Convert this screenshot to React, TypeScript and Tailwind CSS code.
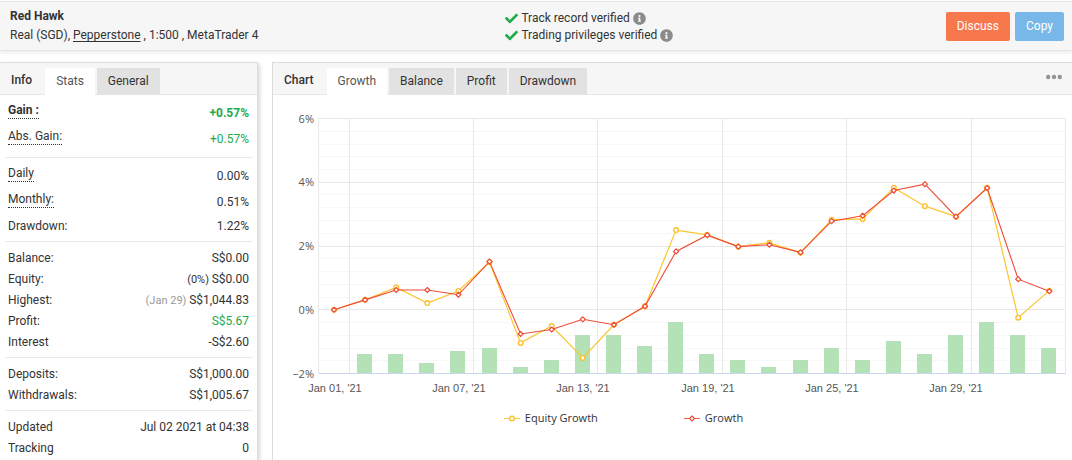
import { clsx } from "clsx";
import { FaCheck, FaInfoCircle } from "react-icons/fa";

interface StatRow {
  label: string;
  value: string;
  note?: string;
  noteStyles?: string;
  valueStyles?: string;
  hint?: boolean;
  bold?: boolean;
}

const STAT_GROUPS: { tall?: boolean; rows: StatRow[] }[] = [
  {
    tall: true,
    rows: [
      { label: "Gain :", value: "+0.57%", valueStyles: "text-[#1ea94b]", hint: true, bold: true },
      { label: "Abs. Gain:", value: "+0.57%", valueStyles: "text-[#1ea94b]", hint: true },
    ],
  },
  {
    tall: true,
    rows: [
      { label: "Daily", value: "0.00%", hint: true },
      { label: "Monthly:", value: "0.51%", hint: true },
      { label: "Drawdown:", value: "1.22%" },
    ],
  },
  {
    rows: [
      { label: "Balance:", value: "S$0.00" },
      { label: "Equity:", value: "S$0.00", note: "(0%)" },
      { label: "Highest:", value: "S$1,044.83", note: "(Jan 29)", noteStyles: "text-[#999]" },
      { label: "Profit:", value: "S$5.67", valueStyles: "text-[#1ea94b]" },
      { label: "Interest", value: "-S$2.60" },
    ],
  },
  {
    rows: [
      { label: "Deposits:", value: "S$1,000.00" },
      { label: "Withdrawals:", value: "S$1,005.67" },
    ],
  },
  {
    rows: [
      { label: "Updated", value: "Jul 02 2021 at 04:38" },
      { label: "Tracking", value: "0" },
    ],
  },
];

const GROWTH = [
  0, 0.31, 0.62, 0.62, 0.47, 1.51, -0.76, -0.62, -0.3, -0.47, 0.11, 1.83, 2.34, 1.98, 2.04, 1.8,
  2.78, 2.95, 3.74, 3.94, 2.92, 3.82, 0.96, 0.58,
];
const EQUITY = [
  0, 0.31, 0.7, 0.21, 0.59, 1.5, -1.04, -0.51, -1.51, -0.47, 0.11, 2.5, 2.35, 1.98, 2.1, 1.79,
  2.82, 2.85, 3.83, 3.25, 2.92, 3.83, -0.25, 0.6,
];
const BARS = [
  0, 19, 19, 10, 22, 25, 6, 13, 38, 38, 27, 51, 19, 13, 6, 13, 25, 13, 32, 19, 38, 51, 38, 25,
];
const DATES = ["Jan 01, '21", "Jan 07, '21", "Jan 13, '21", "Jan 19, '21", "Jan 25, '21", "Jan 29, '21"];

const PLOT = { left: 45.5, right: 792.5, top: 23.5, bottom: 278.5 };

const xAt = (i: number) => 61 + i * 31.1;
const yAt = (v: number) => PLOT.bottom - ((v + 2) * (PLOT.bottom - PLOT.top)) / 8;
const toPoints = (values: number[]) => values.map((v, i) => `${xAt(i)},${yAt(v)}`).join(" ");
const snap = (n: number) => Math.floor(n) + 0.5;

function Tabs({ title, tabs, active }: { title: string; tabs: string[]; active: string }) {
  return (
    <div className="flex h-8 items-end border-b border-[#e8e8e8] bg-[#f6f6f6] pl-[11px]">
      <h2 className="mr-[13px] text-xs leading-[27px] font-medium">{title}</h2>
      <div className="-mb-px flex gap-0.5" role="tablist">
        {tabs.map((tab) => (
          <button
            key={tab}
            type="button"
            role="tab"
            aria-selected={tab === active}
            className={clsx(
              "h-[27px] px-[11px] pb-0.5 text-xs",
              tab === active ? "bg-white text-[#555]" : "bg-[#e2e2e2] text-[#333]"
            )}
          >
            {tab}
          </button>
        ))}
      </div>
    </div>
  );
}

function Stat({ row, tall }: { row: StatRow; tall?: boolean }) {
  return (
    <div
      className={clsx(
        "flex items-start justify-between",
        tall && row.hint ? "h-[26px] leading-6" : "h-[21px] leading-[21px]",
        row.bold && "font-bold"
      )}
    >
      <dt
        className={clsx(row.hint && "mt-0.5 border-b border-dotted border-[#333] leading-[15px]")}
      >
        {row.label}
      </dt>
      <dd className={row.valueStyles}>
        {row.note && <span className={clsx("text-[11px]", row.noteStyles)}>{row.note} </span>}
        {row.value}
      </dd>
    </div>
  );
}

function Verified({ text }: { text: string }) {
  return (
    <li className="flex items-center gap-[3px] leading-[17px]">
      <FaCheck className="size-[13px] text-[#22ab4b]" />
      {text}
      <FaInfoCircle className="size-[13px] text-[#8b8b8b]" />
    </li>
  );
}

function Marker({ x, y, kind }: { x: number; y: number; kind: "equity" | "growth" }) {
  if (kind === "equity") {
    return <circle cx={x} cy={y} r="2.3" fill="#fff" stroke="#fbc02d" strokeWidth="1.4" />;
  }
  return (
    <path
      d={`M${x} ${y - 2.5}l2.5 2.5l-2.5 2.5l-2.5 -2.5z`}
      fill="#fff"
      stroke="#ee4b37"
      strokeWidth="1.2"
    />
  );
}

function GrowthChart() {
  return (
    <svg viewBox="0 0 799 305" className="block w-full" role="img" aria-label="Growth chart">
      {Array.from({ length: 21 }, (_, i) => (
        <line
          key={i}
          x1={PLOT.left}
          x2={PLOT.right}
          y1={snap(yAt(i * 0.4 - 2))}
          y2={snap(yAt(i * 0.4 - 2))}
          stroke={i % 5 === 0 ? "#e8e8e8" : "#f7f7f7"}
        />
      ))}
      {DATES.map((date, i) => (
        <line
          key={date}
          x1={snap(76 + i * 124.4)}
          x2={snap(76 + i * 124.4)}
          y1={PLOT.top}
          y2={PLOT.bottom}
          stroke="#e8e8e8"
        />
      ))}
      <path
        d={`M${PLOT.left} ${PLOT.bottom}V${PLOT.top}M${PLOT.right} ${PLOT.top}V${PLOT.bottom}`}
        stroke="#e8e8e8"
      />
      {BARS.map((h, i) => (
        <rect
          key={i}
          x={Math.round(xAt(i) - 8)}
          y={278 - h}
          width="15"
          height={h}
          fill="#b4e1b6"
        />
      ))}
      <line x1={PLOT.left} x2={PLOT.right} y1={PLOT.bottom} y2={PLOT.bottom} stroke="#ccd6eb" />

      <polyline points={toPoints(EQUITY)} fill="none" stroke="#fbc52d" strokeWidth="1.2" />
      {EQUITY.map((v, i) => (
        <Marker key={i} x={xAt(i)} y={yAt(v)} kind="equity" />
      ))}
      <polyline points={toPoints(GROWTH)} fill="none" stroke="#ee4b37" strokeWidth="1.1" />
      {GROWTH.map((v, i) => (
        <Marker key={i} x={xAt(i)} y={yAt(v)} kind="growth" />
      ))}

      <g className="fill-[#555] font-['Open_Sans',sans-serif] text-[11px]" textAnchor="end">
        {[6, 4, 2, 0, -2].map((v) => (
          <text key={v} x="41" y={Math.round(yAt(v) + 4)}>
            {v < 0 ? `−${-v}%` : `${v}%`}
          </text>
        ))}
      </g>
      <g className="fill-[#555] font-['Liberation_Sans',sans-serif] text-[11px]" textAnchor="middle">
        {DATES.map((date, i) => (
          <text key={date} x={Math.round(62 + i * 124.2)} y="297">
            {date}
          </text>
        ))}
      </g>
    </svg>
  );
}

function LegendItem({ label, kind }: { label: string; kind: "equity" | "growth" }) {
  return (
    <li className="flex items-center gap-[5px]">
      <svg viewBox="0 0 16 8" className="h-2 w-4">
        <path d="M0 4.5H16" stroke={kind === "equity" ? "#fbc93d" : "#ee5a45"} />
        <Marker x={8} y={4.5} kind={kind} />
      </svg>
      {label}
    </li>
  );
}

export default function App() {
  return (
    <div className="flex min-h-screen flex-col bg-white pt-px font-['Roboto',sans-serif] text-xs text-[#333]">
      <header className="flex items-start border-y border-[#e4e4e4] bg-[#f6f6f6] pt-[5px] pr-2 pb-[5px] pl-2.5 shadow-[0_2px_4px_rgba(0,0,0,0.08)]">
        <div className="w-[47%]">
          <h1 className="leading-[18px] font-bold">Red Hawk</h1>
          <p className="leading-5">
            Real (SGD),{" "}
            <a href="#pepperstone" className="underline underline-offset-2">
              Pepperstone
            </a>{" "}
            , 1:500 , MetaTrader 4
          </p>
        </div>
        <ul className="pt-[3px]">
          <Verified text="Track record verified" />
          <Verified text="Trading privileges verified" />
        </ul>
        <div className="ml-auto flex gap-[5px] pt-[5px]">
          <button type="button" className="h-[29px] rounded-[2px] bg-[#f6784c] px-[11px] pb-0.5 text-white">
            Discuss
          </button>
          <button type="button" className="h-[29px] rounded-[2px] bg-[#78b8e8] px-[11px] pb-0.5 text-white">
            Copy
          </button>
        </div>
      </header>

      <div className="mt-[11px] flex flex-1 gap-3.5">
        <aside className="w-[258px] shrink-0 border-t border-r border-[#dcdcdc] shadow-[2px_2px_4px_rgba(0,0,0,0.15)]">
          <Tabs title="Info" tabs={["Stats", "General"]} active="Stats" />
          <div className="px-[5px]">
            {STAT_GROUPS.map((group, i) => (
              <dl
                key={i}
                className="border-b border-[#e8e8e8] px-[3px] pt-1.5 pb-1 last:border-b-0 last:pb-0"
              >
                {group.rows.map((row) => (
                  <Stat key={row.label} row={row} tall={group.tall} />
                ))}
              </dl>
            ))}
          </div>
        </aside>

        <main className="min-w-0 flex-1 border-t border-l border-[#dcdcdc]">
          <div className="relative">
            <Tabs
              title="Chart"
              tabs={["Growth", "Balance", "Profit", "Drawdown"]}
              active="Growth"
            />
            <button type="button" aria-label="More" className="absolute top-2.5 right-2.5">
              <svg viewBox="0 0 16 8" className="h-2 w-4" fill="#909596">
                <circle cx="2.2" cy="4" r="2.2" />
                <circle cx="8" cy="4" r="2.2" />
                <circle cx="13.8" cy="4" r="2.2" />
              </svg>
            </button>
          </div>
          <GrowthChart />
          <ul className="mt-2.5 flex justify-center gap-[86px] pr-[98px] font-['Open_Sans',sans-serif] text-[11px] leading-4 font-medium">
            <LegendItem label="Equity Growth" kind="equity" />
            <LegendItem label="Growth" kind="growth" />
          </ul>
        </main>
      </div>
    </div>
  );
}
